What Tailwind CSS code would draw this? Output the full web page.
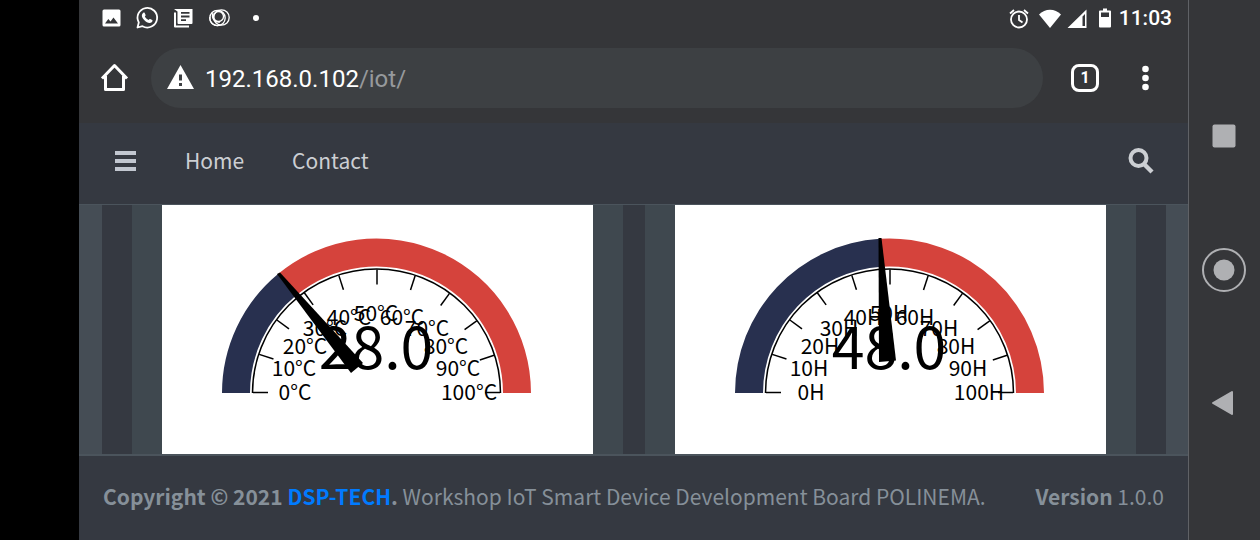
<!DOCTYPE html>
<html lang="en">
<head>
<meta charset="utf-8">
<meta name="viewport" content="width=device-width, initial-scale=1">
<title>IoT Dashboard</title>
<script src="https://cdn.jsdelivr.net/npm/@tailwindcss/browser@4"></script>
</head>
<body class="flex min-h-screen bg-black pl-[79px] font-['Noto_Sans_CJK_JP',sans-serif]">

<!-- Shared gauge parts -->
<svg class="hidden" aria-hidden="true">
  <defs>
    <g id="scale" fill="none" stroke="#000" stroke-width="1.5">
      <path d="M90.5 188a124 124 0 0 1 248 0"/>
      <path id="tick" d="M91 187.500h15"/>
      <use href="#tick" transform="rotate(18 214.500 188)"/>
      <use href="#tick" transform="rotate(36 214.500 188)"/>
      <use href="#tick" transform="rotate(54 214.500 188)"/>
      <use href="#tick" transform="rotate(72 214.500 188)"/>
      <use href="#tick" transform="rotate(90 214.500 188)"/>
      <use href="#tick" transform="rotate(108 214.500 188)"/>
      <use href="#tick" transform="rotate(126 214.500 188)"/>
      <use href="#tick" transform="rotate(144 214.500 188)"/>
      <use href="#tick" transform="rotate(162 214.500 188)"/>
      <path d="M338 187.500h-15"/>
    </g>
  </defs>
</svg>

<div class="flex min-w-0 flex-1 flex-col bg-[#353639]">
  <!-- Status bar -->
  <div class="flex h-9 items-center justify-between pr-4 pl-5 text-white">
    <div class="flex items-center gap-3">
      <svg class="size-6" viewBox="0 0 24 24" fill="currentColor"><path fill-rule="evenodd" d="M5 3.500h15a1.500 1.500 0 0 1 1.500 1.500v14a1.500 1.500 0 0 1-1.500 1.500H5A1.500 1.500 0 0 1 3.500 19V5A1.500 1.500 0 0 1 5 3.500zM6 17.500h13l-4.500-6-3 4-2.200-2.500z"/></svg>
      <svg class="size-6" viewBox="0 0 24 24"><path d="M2.500 21.500l1.300-5A9.800 9.800 0 1 1 7.500 20.200z" fill="none" stroke="currentColor" stroke-width="1.800" stroke-linejoin="round"/><path fill="currentColor" d="M8.300 6.800c.5-.4 1.100-.3 1.400.2l.9 2c.1.400 0 .7-.8 1.600.8 1.600 2 2.700 3.800 3.500.9-1.100 1.100-1.300 1.500-1.100l2.100 1c.4.2.4.500.2 1.200-.5 1.300-1.700 1.800-2.900 1.700-3.500-.5-6.800-3.600-7.600-6.700-.2-1.400.4-2.600 1.400-3.400z"/></svg>
      <svg class="size-6" viewBox="0 0 24 24" fill="currentColor"><path d="M3 6.500h2V19.500h13v2H4a1 1 0 0 1-1-1z"/><path fill-rule="evenodd" d="M3 3h18.500v14a1 1 0 0 1-1 1H7.500a1 1 0 0 1-1-1V5.500zM10 6v1.800h8.500V6zM10 9.600v1.800h8.500V9.600zM10 13.200V15h5v-1.800z"/></svg>
      <svg class="size-6" viewBox="0 0 24 24" fill="none" stroke="currentColor" stroke-width="1.300"><circle cx="10.500" cy="12" r="7.700"/><circle cx="14.500" cy="11.500" r="7.700"/><circle cx="11.500" cy="10.500" r="5"/><path d="M3 11c-1 6 5 10 10 8M6 7c-2 5 2 10 7 9"/></svg>
      <span class="ml-[10px] size-[6px] rounded-full bg-white"></span>
    </div>
    <div class="flex items-center pt-px font-[Roboto,sans-serif] text-[21px] font-medium">
      <svg class="mr-[7px] size-6" viewBox="0 0 24 24" fill="none" stroke="currentColor" stroke-width="1.800"><circle cx="12" cy="12.500" r="8"/><path d="M12 8v5l3.500 2.500M3 6.500l4-3.500M21 6.500L17 3"/></svg>
      <svg class="mr-[3px] size-6" viewBox="0 0 24 24" fill="currentColor"><path d="M1 7.500C7 1 17 1 23 7.500L12 21z"/></svg>
      <svg class="mr-1 size-6" viewBox="0 0 24 24" fill="currentColor"><path fill-rule="evenodd" d="M21.500 2.500v18.500h-19zM17.500 9.500v9.500h2.500V7z"/></svg>
      <svg class="mr-[2px] size-6" viewBox="0 0 24 24" fill="currentColor"><path fill-rule="evenodd" d="M10 1.500h4v2h3a1 1 0 0 1 1 1v15a1 1 0 0 1-1 1H7a1 1 0 0 1-1-1v-15a1 1 0 0 1 1-1h3zM8 5.500V10h8V5.500z"/></svg>
      <span>11:03</span>
    </div>
  </div>

  <!-- Browser toolbar -->
  <div class="flex h-[87px] items-start pt-3 pr-[27px] pl-5 text-white">
    <button type="button" aria-label="Home" class="mt-3 mr-5 size-8">
      <svg class="size-8" viewBox="0 0 32 32" fill="none" stroke="currentColor" stroke-width="3"><path d="M3 18.500L15.500 5.500 28 18.500M6.500 16v13.500h18V16" stroke-linejoin="round"/></svg>
    </button>
    <button type="button" aria-label="Address" class="flex h-[60px] flex-1 items-center gap-2 rounded-full bg-[#3d4043] pl-[14px] font-[Roboto,sans-serif] text-2xl">
      <svg class="size-8" viewBox="0 0 32 32" fill="currentColor"><path fill-rule="evenodd" d="M15.500 3L29 27H2zM14 12.500v6h3v-6zM14 21v3h3v-3z"/></svg>
      <span class="pt-px">192.168.0.102<span class="text-[#96999c]">/iot/</span></span>
    </button>
    <button type="button" aria-label="Tabs" class="mt-4 ml-7 flex size-7 items-center justify-center rounded-lg border-3 border-white font-[Roboto,sans-serif] text-base font-bold">1</button>
    <button type="button" aria-label="More" class="mt-3 ml-[30px] h-9 w-8">
      <svg class="h-9 w-8" viewBox="0 0 32 36" fill="currentColor"><circle cx="16.500" cy="9" r="3.300"/><circle cx="16.500" cy="18" r="3.300"/><circle cx="16.500" cy="27" r="3.300"/></svg>
    </button>
  </div>

  <!-- Site navigation -->
  <nav class="flex h-[82px] items-center border-b border-[#4b545c] bg-[#353941] pr-[34px] pb-[6px] pl-9 text-[21px] text-[#cccfd3]">
    <button type="button" aria-label="Menu" class="mr-12 h-5 w-[22px]">
      <svg class="h-5 w-[22px]" viewBox="0 0 22 20" fill="#c2c7d0"><path d="M0 0h21v4H0zM0 8h21v4H0zM0 16h21v4H0z"/></svg>
    </button>
    <a href="#" class="mr-12">Home</a>
    <a href="#">Contact</a>
    <button type="button" aria-label="Search" class="ml-auto size-[26px]">
      <svg class="size-[26px]" viewBox="0 0 26 26" fill="none" stroke="currentColor"><circle cx="10.500" cy="10" r="8" stroke-width="4"/><path d="M16 16l8 8" stroke-width="4.500"/></svg>
    </button>
  </nav>

  <!-- Gauges -->
  <main class="flex flex-1 bg-[#454d55] pr-[22px] pl-[23px]">
    <div class="flex flex-1 gap-[22px] bg-[#353941] px-[30px]">
      <section class="flex-1 bg-[#3f484f] px-[30px]">
        <svg class="block h-[249px] w-full bg-white" viewBox="0 0 431 249" role="img" aria-label="Temperature">
          <path fill="#28304f" d="M60 188A154.500 154.500 0 0 1 116 69l17.900 21.500A126.500 126.500 0 0 0 88 188z"/>
          <path fill="#d5433c" d="M116 69A154.500 154.500 0 0 1 369 188h-28A126.500 126.500 0 0 0 133.900 90.500z"/>
          <use href="#scale"/>
          <g class="text-[21px]" text-anchor="middle">
            <text x="133" y="195">0°C</text><text x="132" y="171">10°C</text><text x="143" y="149">20°C</text><text x="163" y="131">30°C</text><text x="187" y="120">40°C</text><text x="214" y="116">50°C</text><text x="240" y="120">60°C</text><text x="265" y="131">70°C</text><text x="284" y="149">80°C</text><text x="296" y="171">90°C</text><text x="307" y="195">100°C</text>
          </g>
          <text class="text-[59px]" x="214" y="164" text-anchor="middle">28.0</text>
          <path d="M115 69l3-1.500 83 90.500-12 10z"/>
        </svg>
      </section>
      <section class="flex-1 bg-[#3f484f] px-[30px]">
        <svg class="block h-[249px] w-full bg-white" viewBox="0 0 431 249" role="img" aria-label="Humidity">
          <path fill="#28304f" d="M60 188A154.500 154.500 0 0 1 204.800 33.800l1.800 28A126.500 126.500 0 0 0 88 188z"/>
          <path fill="#d5433c" d="M204.800 33.800A154.500 154.500 0 0 1 369 188h-28A126.500 126.500 0 0 0 206.600 61.800z"/>
          <use href="#scale"/>
          <g class="text-[21px]" text-anchor="middle">
            <text x="136" y="195">0H</text><text x="134" y="171">10H</text><text x="145" y="149">20H</text><text x="164" y="131">30H</text><text x="188" y="120">40H</text><text x="214" y="116">50H</text><text x="240" y="120">60H</text><text x="264" y="131">70H</text><text x="281" y="149">80H</text><text x="293" y="171">90H</text><text x="304" y="195">100H</text>
          </g>
          <text class="text-[59px]" x="214" y="164" text-anchor="middle">48.0</text>
          <path d="M203.500 33h3l14.500 122.500-17 1.500z"/>
        </svg>
      </section>
    </div>
  </main>

  <footer class="flex h-[86px] items-center justify-between border-t-2 border-[#4b545c] bg-[#353941] px-6 pb-[3px] text-[21px] whitespace-nowrap text-[#869099]">
    <p><strong>Copyright © 2021 <a href="#" class="text-[#007bff]">DSP-TECH</a>.</strong> Workshop IoT Smart Device Development Board POLINEMA.</p>
    <p><b>Version</b> 1.0.0</p>
  </footer>
</div>

<!-- System navigation -->
<div class="flex w-[72px] flex-col items-center border-l border-[#606266] bg-[#353639] pt-[112px] pr-[2px] text-[#afb0b3]">
  <button type="button" aria-label="Recent apps" class="size-12"><svg class="size-12" viewBox="0 0 48 48"><rect x="12.500" y="12.500" width="23" height="23" rx="2" fill="currentColor"/></svg></button>
  <button type="button" aria-label="Home screen" class="mt-[86px] size-12"><svg class="size-12" viewBox="0 0 48 48"><circle cx="24" cy="24" r="21" fill="none" stroke="currentColor" stroke-width="2"/><circle cx="24" cy="24" r="10.500" fill="currentColor"/></svg></button>
  <button type="button" aria-label="Back" class="mt-[85px] size-12"><svg class="size-12" viewBox="0 0 48 48"><path d="M13 24l19-11v22z" fill="currentColor" stroke="currentColor" stroke-width="2" stroke-linejoin="round"/></svg></button>
</div>
</body>
</html>
